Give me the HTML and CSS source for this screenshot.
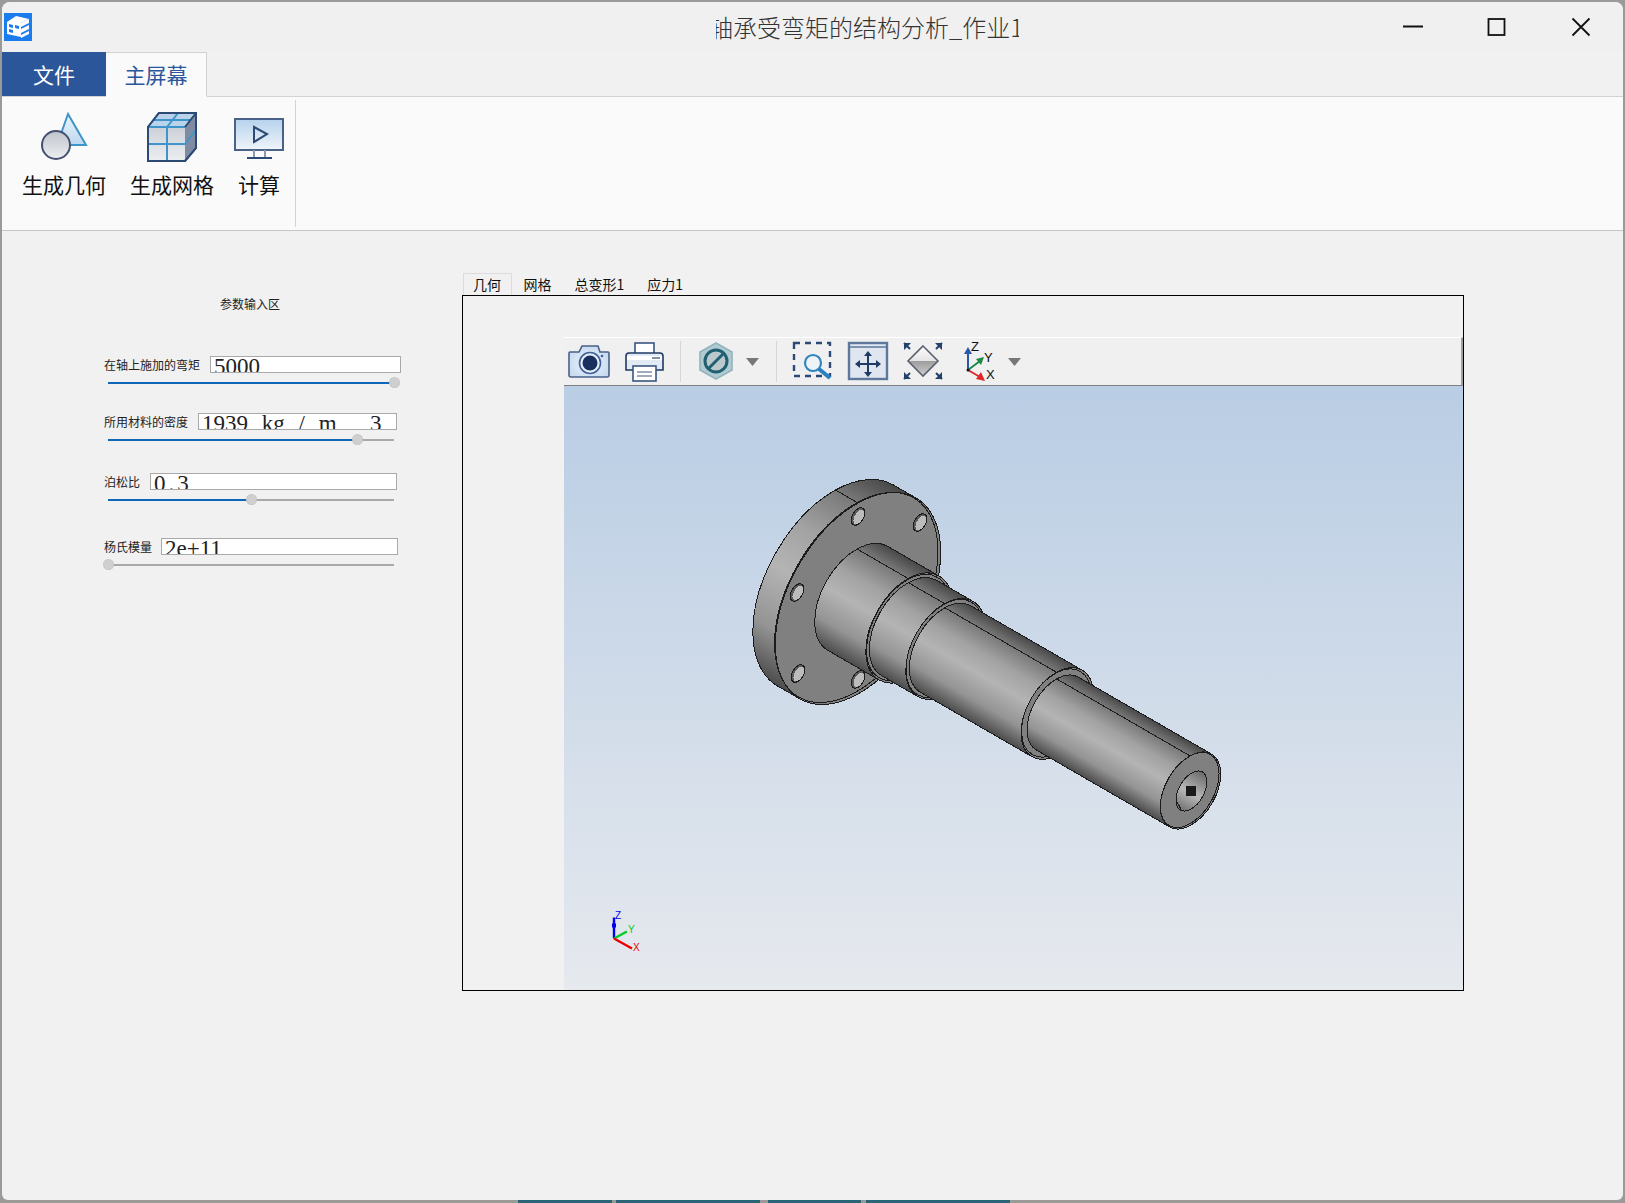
FILE: index.html
```html
<!DOCTYPE html>
<html lang="zh-CN">
<head>
  <meta charset="utf-8" />
  <title>轴承受弯矩的结构分析_作业1</title>
  <link rel="stylesheet" href="styles.css">
</head>
<body>
  <div class="window">
    <div class="titlebar">
      <svg class="app-icon" viewBox="0 0 28 28">
        <rect width="28" height="28" fill="#1b7ced"/>
        <path d="M3 9 L12 3 L25 6 L17 10 L17 24 L3 21 Z" fill="#fff"/>
        <path d="M17 10 L25 6 L25 10 L17 14 Z M17 16 L25 12 L25 16 L17 20 Z M17 22 L25 18 L25 21 L17 25 Z" fill="#fff"/>
        <path d="M5 11 L9 12 L9 15 L5 14 Z M11 12 L15 13 L15 16 L11 15 Z M5 16 L9 17 L9 20 L5 19 Z" fill="#1b7ced"/>
      </svg>
      <div class="title"><span>轴承受弯矩的结构分析_作业1</span></div>
      <div class="win-btns">
        <svg viewBox="0 0 20 18"><path d="M0 8.5 H20" class="win-line"/></svg>
        <svg viewBox="0 0 20 18"><rect x="1.5" y="1" width="16" height="16" class="win-line"/></svg>
        <svg viewBox="0 0 20 18"><path d="M1.5 0.5 L18.5 17.5 M18.5 0.5 L1.5 17.5" class="win-line"/></svg>
      </div>
    </div>

    <div class="ribbon-tabs">
      <div class="rtab rtab-file">文件</div>
      <div class="rtab rtab-home">主屏幕</div>
    </div>

    <div class="ribbon">
      <div class="rgroup">
        <div class="rbtn">
          <svg class="ricon" viewBox="0 0 50 50">
            <defs>
              <linearGradient id="triFill" x1="0" y1="0" x2="0" y2="1"><stop offset="0" stop-color="#eef5fb"/><stop offset="1" stop-color="#bcd8ef"/></linearGradient>
              <linearGradient id="greyFill" x1="0" y1="0" x2="0" y2="1"><stop offset="0" stop-color="#bfc4cc"/><stop offset="1" stop-color="#eceef1"/></linearGradient>
            </defs>
            <path d="M29 2 L47 33 L18 33 Z" fill="url(#triFill)" stroke="#3f94c9" stroke-width="2"/>
            <circle cx="17" cy="33" r="14" fill="url(#greyFill)" stroke="#44506f" stroke-width="2"/>
          </svg>
          <span>生成几何</span>
        </div>
        <div class="rbtn">
          <svg class="ricon" viewBox="0 0 50 50">
            <path d="M1 15 L12 1 L49 1 L49 36 L38 49 L1 49 Z" fill="url(#greyFill)" stroke="#2c4a73" stroke-width="2"/>
            <path d="M1 15 L12 1 L49 1 L38 15 Z" fill="#b9d3ea"/>
            <path d="M49 1 L49 36 L38 49 L38 15 Z" fill="#7f8ba0"/>
            <path d="M1 15 H38 M20 15 V49 M1 32 H38 M20 15 L31 1 M7 8 H44 M38 32 L49 18" fill="none" stroke="#3f94c9" stroke-width="2"/>
            <path d="M1 15 L12 1 H49 V36 L38 49 H1 Z M49 1 L38 15" fill="none" stroke="#2c4a73" stroke-width="2"/>
          </svg>
          <span>生成网格</span>
        </div>
        <div class="rbtn">
          <svg class="ricon" viewBox="0 0 50 42">
            <defs>
              <linearGradient id="screenFill" x1="0" y1="0" x2="0" y2="1"><stop offset="0" stop-color="#b5d2ec"/><stop offset="1" stop-color="#f0f5fa"/></linearGradient>
            </defs>
            <rect x="1" y="1" width="48" height="31" fill="url(#screenFill)" stroke="#4a6288" stroke-width="2"/>
            <path d="M20 9 L33 16 L20 24 Z" fill="none" stroke="#2c4a73" stroke-width="2"/>
            <path d="M20 32 V39 M31 32 V39" stroke="#8c9ab0" stroke-width="2"/>
            <path d="M13 40 H38" stroke="#2c4a73" stroke-width="2"/>
          </svg>
          <span>计算</span>
        </div>
      </div>
    </div>

    <div class="content">
      <div class="params">
        <div class="params-title">参数输入区</div>

        <div class="param param-moment">
          <div class="param-row">
            <label>在轴上施加的弯矩</label>
            <div class="field">5000</div>
          </div>
          <div class="slider"><div class="slider-fill" style="width:100%"></div><div class="slider-knob" style="left:100%"></div></div>
        </div>

        <div class="param param-density">
          <div class="param-row">
            <label>所用材料的密度</label>
            <div class="field field-unit">1939 kg / m  <span class="unit-exp">3</span></div>
          </div>
          <div class="slider"><div class="slider-fill" style="width:87.4%"></div><div class="slider-knob" style="left:87.4%"></div></div>
        </div>

        <div class="param param-poisson">
          <div class="param-row">
            <label>泊松比</label>
            <div class="field field-dec">0.3</div>
          </div>
          <div class="slider"><div class="slider-fill" style="width:50.2%"></div><div class="slider-knob" style="left:50.2%"></div></div>
        </div>

        <div class="param param-young">
          <div class="param-row">
            <label>杨氏模量</label>
            <div class="field">2e+11</div>
          </div>
          <div class="slider"><div class="slider-fill" style="width:0%"></div><div class="slider-knob" style="left:0%"></div></div>
        </div>
      </div>

      <div class="plots">
        <div class="plot-tabs">
          <div class="ptab ptab-on">几何</div>
          <div class="ptab">网格</div>
          <div class="ptab">总变形1</div>
          <div class="ptab">应力1</div>
        </div>
        <div class="plot-frame">
          <div class="viewer">
            <div class="toolbar">
              <svg class="tool" viewBox="0 0 50 47">
                <defs>
                  <radialGradient id="camFill" cx="0.5" cy="0.55" r="0.6"><stop offset="0" stop-color="#eef4fb"/><stop offset="1" stop-color="#c6d9f0"/></radialGradient>
                </defs>
                <path d="M6 14 H15 L18 8 H34 L36 14 H44 Q45 14 45 15 V37 Q45 39 43 39 H7 Q5 39 5 37 V15 Q5 14 6 14 Z" fill="url(#camFill)" stroke="#4a6288" stroke-width="1.6"/>
                <circle cx="26" cy="25" r="10.5" fill="#e6eef8" stroke="#3f629a" stroke-width="1.6"/>
                <circle cx="26" cy="25" r="7.5" fill="#1b2f5e"/>
                <circle cx="38" cy="18" r="1.3" fill="#3f629a"/>
              </svg>
              <svg class="tool tool-end" viewBox="0 0 50 47">
                <rect x="16" y="5" width="19" height="11" fill="#fff" stroke="#3a5680" stroke-width="1.6"/>
                <path d="M10 15 H41 Q44 15 44 18 V32 H7 V18 Q7 15 10 15 Z" fill="#e2eaf3" stroke="#1f3a64" stroke-width="1.6"/>
                <path d="M8 18 H43 V22 H8 Z" fill="#fff"/>
                <path d="M33 20 H41" stroke="#7f90a8" stroke-width="2"/>
                <rect x="14" y="28" width="23" height="15" fill="#fff" stroke="#3a5680" stroke-width="1.6"/>
                <path d="M18 34 H33 M18 38 H33" stroke="#7f90a8" stroke-width="1.6"/>
              </svg>
              <div class="tool-sep"></div>
              <svg class="tool" viewBox="0 0 50 47">
                <path d="M24 5 L40 14 V32 L24 41 L8 32 V14 Z" fill="#b2cad2" stroke="#93b5bd" stroke-width="1.6"/>
                <circle cx="24" cy="23" r="11" fill="#bcc8cc" stroke="#1f6072" stroke-width="3"/>
                <path d="M16 31 L32 15" stroke="#1f6072" stroke-width="3"/>
              </svg>
              <svg class="caret caret-hex" viewBox="0 0 13 8"><path d="M0 0 H13 L6.5 8 Z"/></svg>
              <div class="tool-sep"></div>
              <svg class="tool" viewBox="0 0 50 47">
                <rect x="6" y="5" width="36" height="33" fill="none" stroke="#2b4a75" stroke-width="2.4" stroke-dasharray="6 5"/>
                <circle cx="25" cy="25" r="8" fill="#eef3f8" stroke="#3085c0" stroke-width="2.2"/>
                <path d="M31 31 L42 40" stroke="#2a7fc0" stroke-width="4"/>
              </svg>
              <svg class="tool" viewBox="0 0 50 47">
                <rect x="6" y="5" width="38" height="36" fill="#dfe6f0" stroke="#5d789b" stroke-width="2.4"/>
                <path d="M6 9 H44" stroke="#5d789b" stroke-width="1.6"/>
                <path d="M25 15 V37 M14 26 H36" stroke="#1f3a64" stroke-width="2"/>
                <path d="M25 13 L21 18 H29 Z M25 39 L21 34 H29 Z M12 26 L17 22 V30 Z M38 26 L33 22 V30 Z" fill="#1f3a64"/>
              </svg>
              <svg class="tool" viewBox="0 0 50 47">
                <defs>
                  <linearGradient id="diaTop" x1="0" y1="0" x2="0" y2="1"><stop offset="0" stop-color="#fff"/><stop offset="1" stop-color="#e4e4e4"/></linearGradient>
                  <linearGradient id="diaBot" x1="0" y1="0" x2="0" y2="1"><stop offset="0" stop-color="#9c9c9c"/><stop offset="1" stop-color="#cfcfcf"/></linearGradient>
                </defs>
                <path d="M10 23 L25 8 L40 23 Z" fill="url(#diaTop)"/>
                <path d="M10 23 L25 38 L40 23 Z" fill="url(#diaBot)"/>
                <path d="M25 8 L40 23 L25 38 L10 23 Z" fill="none" stroke="#5a6270" stroke-width="1.6"/>
                <path d="M6 5 L13 5 L6 12 Z M44 5 L44 12 L37 5 Z M6 41 L6 34 L13 41 Z M44 41 L37 41 L44 34 Z" fill="#24416b"/>
                <path d="M6 5 L12 11 M44 5 L38 11 M6 41 L12 35 M44 41 L38 35" stroke="#24416b" stroke-width="2"/>
              </svg>
              <svg class="tool" viewBox="0 0 50 47">
                <path d="M15 32 V14" stroke="#2b57a8" stroke-width="2"/>
                <path d="M15 9 L11 16 H19 Z" fill="#2b57a8"/>
                <path d="M15 32 L27 23" stroke="#1c8a45" stroke-width="2"/>
                <path d="M31 19 L23 21 L28 27 Z" fill="#1c8a45"/>
                <path d="M15 32 L27 39" stroke="#e0262a" stroke-width="2"/>
                <path d="M32 43 L23 41 L28 34 Z" fill="#e0262a"/>
                <circle cx="15" cy="32" r="1.5" fill="#111"/>
                <text x="18" y="13" class="axis-label">Z</text>
                <text x="31" y="24" class="axis-label">Y</text>
                <text x="33" y="41" class="axis-label">X</text>
              </svg>
              <svg class="caret" viewBox="0 0 13 8"><path d="M0 0 H13 L6.5 8 Z"/></svg>
            </div>
            <div class="viewport">
              <svg class="scene" viewBox="564 386 899 603" shape-rendering="crispEdges">
                <defs>
                  <linearGradient id="cyl" x1="0" y1="0" x2="0" y2="1">
                    <stop offset="0" stop-color="#484848"/><stop offset="0.15" stop-color="#7a7a7a"/>
                    <stop offset="0.35" stop-color="#a2a2a2"/><stop offset="0.55" stop-color="#b4b4b4"/>
                    <stop offset="0.8" stop-color="#949494"/><stop offset="1" stop-color="#4c4c4c"/>
                  </linearGradient>
                  <linearGradient id="bore" x1="0" y1="0" x2="0" y2="1">
                    <stop offset="0" stop-color="#6a6a6a"/><stop offset="0.55" stop-color="#b8b8b8"/><stop offset="1" stop-color="#707070"/>
                  </linearGradient>
                </defs>
                <g transform="translate(858 598) rotate(30)" stroke="#1c1c1c" stroke-width="1">
                  <!-- flange -->
                  <path d="M-26 -116 L0 -116 L0 116 L-26 116 A68 116 0 0 1 -26 -116 Z" fill="url(#cyl)"/>
                  <ellipse cx="0" cy="0" rx="68" ry="116" fill="#808080"/>
                  <ellipse cx="-2" cy="0" rx="67" ry="115" fill="none"/>
                  <path d="M-74 -82.7 L-48 -82.7" fill="none"/>
                  <g class="holes">
                    <ellipse cx="-41" cy="-71" rx="5.6" ry="9.6" fill="#5a5a5a"/><ellipse cx="-40" cy="-71" rx="4.2" ry="8" fill="#bcbcbc" stroke="none"/>
                    <ellipse cx="15.7" cy="-96.8" rx="5.6" ry="9.6" fill="#5a5a5a"/><ellipse cx="16.7" cy="-96.8" rx="4.2" ry="8" fill="#bcbcbc" stroke="none"/>
                    <ellipse cx="-55.8" cy="25.3" rx="5.6" ry="9.6" fill="#5a5a5a"/><ellipse cx="-54.8" cy="25.3" rx="4.2" ry="8" fill="#bcbcbc" stroke="none"/>
                    <ellipse cx="-14.5" cy="95" rx="5.6" ry="9.6" fill="#5a5a5a"/><ellipse cx="-13.5" cy="95" rx="4.2" ry="8" fill="#bcbcbc" stroke="none"/>
                    <ellipse cx="40.5" cy="70" rx="5.6" ry="9.6" fill="#5a5a5a"/><ellipse cx="41.5" cy="70" rx="4.2" ry="8" fill="#bcbcbc" stroke="none"/>
                  </g>
                  <!-- shaft sections, big end first -->
                  <path d="M0 -60 L59 -60 L59 60 L0 60 A36 60 0 0 1 0 -60 Z" fill="url(#cyl)"/>
                  <path d="M-25.5 -42.4 L33.5 -42.4" fill="none"/>
                  <ellipse cx="59" cy="0" rx="36" ry="60" fill="#808080"/>
                  <ellipse cx="58" cy="0" rx="34.5" ry="58" fill="none"/>

                  <path d="M59 -55 L101 -55 L101 55 L59 55 A33 55 0 0 1 59 -55 Z" fill="url(#cyl)"/>
                  <path d="M35.7 -38.9 L77.7 -38.9" fill="none"/>
                  <ellipse cx="101" cy="0" rx="33" ry="55" fill="#808080"/>
                  <ellipse cx="100" cy="0" rx="32" ry="53.5" fill="none"/>

                  <path d="M101 -50 L230 -50 L230 50 L101 50 A30 50 0 0 1 101 -50 Z" fill="url(#cyl)"/>
                  <path d="M79.8 -35.4 L208.8 -35.4" fill="none"/>
                  <ellipse cx="230" cy="0" rx="30" ry="50" fill="#808080"/>
                  <ellipse cx="229" cy="0" rx="29" ry="48" fill="none"/>

                  <path d="M230 -42 L384 -42 L384 42 L230 42 A25 42 0 0 1 230 -42 Z" fill="url(#cyl)"/>
                  <path d="M212.3 -29.7 L366.3 -29.7" fill="none"/>
                  <ellipse cx="384" cy="0" rx="25" ry="42" fill="#808080"/>
                  <ellipse cx="383" cy="0" rx="24.2" ry="41" fill="none"/>
                  <ellipse cx="385" cy="0" rx="12.5" ry="22" fill="url(#bore)"/>
                  <path d="M377 16 L385 21" fill="none"/>
                </g>
                <rect x="1186" y="785" width="10" height="10" fill="#1a1a1a"/>
                <!-- small triad -->
                <g shape-rendering="auto">
                  <path d="M614 938 V917" stroke="#0000ee" stroke-width="2.4"/>
                  <rect x="612" y="923" width="4" height="4" fill="#0000ee"/>
                  <path d="M614 938 L627 931" stroke="#00cc22" stroke-width="2.4"/>
                  <path d="M614 938 L632 948" stroke="#ee0000" stroke-width="2.4"/>
                  <text x="615" y="918" class="mini-label mini-z">Z</text>
                  <text x="628" y="932" class="mini-label mini-y">Y</text>
                  <text x="633" y="950" class="mini-label mini-x">X</text>
                </g>
              </svg>
            </div>
          </div>
        </div>
      </div>
    </div>
  </div>

  <div class="taskbar-edge">
    <i></i><i></i><i></i><i></i>
  </div>
</body>
</html>
```

FILE: styles.css
```css
/* base */
html, body { margin: 0; height: 100%; }
body {
  background: #9c9a98;
  font-family: "Noto Sans CJK SC", "Liberation Sans", sans-serif;
  overflow: hidden;
  color: #111;
}
.window {
  margin: 2px 2px 0;
  height: 1198px;
  background: #f1f1f1;
  border-radius: 8px 8px 6px 6px;
  display: flex; flex-direction: column;
  overflow: hidden;
}

/* title bar */
.titlebar {
  height: 50px; flex: none;
  display: flex; align-items: flex-start;
  background: #f0f0f0;
}
.app-icon { width: 28px; height: 28px; margin: 11px 0 0 2px; flex: none; }
.title {
  width: 303px; height: 36px; margin: 7px 0 0 684px;
  overflow: hidden; white-space: nowrap;
  font-size: 24px; line-height: 36px; font-weight: 300;
  color: #333;
}
.title span { display: block; margin-left: -7px; }
.win-btns { display: flex; margin: 16px 0 0 auto; padding-right: 32px; gap: 64px; }
.win-btns svg { width: 20px; height: 18px; overflow: visible; }
.win-line { fill: none; stroke: #111; stroke-width: 1.8; }

/* ribbon */
.ribbon-tabs {
  height: 44px; flex: none;
  display: flex;
  border-bottom: 1px solid #d2d2d2;
  box-sizing: content-box;
}
.rtab { font-size: 21px; line-height: 44px; text-align: center; height: 44px; }
.rtab-file { width: 104px; background: #2b579a; color: #fff; }
.rtab-home {
  width: 101px; background: #fafafa; color: #2b579a;
  border: 1px solid #d2d2d2; border-bottom: 1px solid #fafafa; border-left: 0;
  line-height: 42px; box-sizing: border-box; height: 45px;
}
.ribbon {
  height: 134px; flex: none;
  background: #fafafa;
  border-bottom: 1px solid #c6c6c6;
  box-sizing: border-box;
  padding-top: 3px;
}
.rgroup {
  width: 294px; height: 127px;
  border-right: 1px solid #d4d4d4;
  padding-left: 20px;
  box-sizing: border-box;
  display: flex; gap: 24px;
}
.rbtn {
  display: flex; flex-direction: column; align-items: center;
  font-size: 21px; line-height: 30px; color: #111;
}
.rbtn span { white-space: nowrap; }
.ricon { width: 50px; height: 50px; margin: 12px 0 7px; overflow: visible; }
.rbtn:nth-child(3) { margin-left: -4px; }
.rbtn:nth-child(3) .ricon { height: 42px; margin: 18px 0 9px; }

/* content */
.content { flex: 1; display: flex; min-height: 0; }
.params {
  width: 460px; flex: none; box-sizing: border-box;
  padding: 65px 0 0 102px;
}
.params-title {
  width: 292px; text-align: center;
  font-size: 12px; line-height: 16px; color: #222;
}
.param-moment { margin-top: 44px; width: 297px; }
.param-density { margin-top: 29px; width: 293px; }
.param-poisson { margin-top: 32px; width: 293px; }
.param-young { margin-top: 37px; width: 294px; }
.param-young .param-row { gap: 9px; }
.param-row { display: flex; align-items: center; gap: 10px; height: 17px; }
.param-row label { font-size: 12px; line-height: 18px; color: #222; white-space: nowrap; }
.field {
  flex: 1; height: 17px; box-sizing: border-box;
  border: 1px solid #a9a9a9; background: #fff;
  font-family: "Liberation Serif", serif; font-size: 23px; line-height: 20px;
  padding-left: 3px; overflow: hidden; white-space: pre;
  color: #222;
}
.field-unit { word-spacing: 8px; }
.unit-exp { margin-left: 6px; }
.field-dec { letter-spacing: 3px; }
.slider {
  position: relative;
  width: 286px; height: 2px; margin: 9px 0 4px 4px;
  background: #a9a9a9;
}
.slider-fill { height: 2px; background: #0f66b7; }
.slider-knob {
  position: absolute; top: -5px;
  width: 11px; height: 11px; margin-left: -5.5px;
  border-radius: 50%; background: #cfcfcf;
  box-sizing: border-box; border: 1px dotted #bdbdbd;
}

/* plot area */
.plots { width: 1002px; margin-top: 42px; }
.plot-tabs { display: flex; height: 22px; padding-left: 1px; }
.ptab {
  font-size: 14px; line-height: 22px; padding: 0 11.5px;
  color: #111; white-space: nowrap;
}
.ptab-on {
  background: #f1f1f1;
  border: 1px solid #dcdcdc; border-bottom: 0;
  padding: 0 10px 0 9px; line-height: 21px;
}
.plot-frame {
  height: 696px; box-sizing: border-box;
  border: 1px solid #000;
  padding: 41px 0 0 101px;
}
.viewer { height: 100%; display: flex; flex-direction: column; }
.toolbar {
  height: 49px; flex: none; box-sizing: border-box;
  display: flex; align-items: center;
  background: #f0f0f0;
  border-top: 1px solid #fff;
  border-bottom: 1px solid #808080;
  border-right: 2px solid #a0a0a0;
}
.tool { width: 50px; height: 47px; margin-right: 5px; flex: none; }
.tool-end { margin-right: 11px; }
.tool-sep { width: 1px; height: 41px; background: #d6d6d6; margin-right: 11px; flex: none; }
.caret { width: 13px; height: 8px; flex: none; fill: #777; }
.caret-hex { margin-left: -1px; margin-right: 17px; }
.axis-label { font: 13px "Liberation Sans", sans-serif; fill: #111; stroke: none; }
.viewport {
  flex: 1; min-height: 0;
  background: linear-gradient(#b9cde4, #e6e9ee);
}
.scene { display: block; width: 100%; height: 100%; }
.mini-label { font: 10px "Liberation Sans", sans-serif; }
.mini-z { fill: #0000ee; }
.mini-y { fill: #00cc22; }
.mini-x { fill: #ee0000; }

/* sliver of the desktop under the window */
.taskbar-edge { height: 3px; padding-left: 518px; display: flex; }
.taskbar-edge i { display: block; height: 3px; background: #2a6478; margin-right: 4px; width: 94px; }
.taskbar-edge i:nth-child(2) { width: 144px; margin-right: 8px; }
.taskbar-edge i:nth-child(3) { width: 93px; margin-right: 5px; }
.taskbar-edge i:nth-child(4) { width: 144px; }
```
